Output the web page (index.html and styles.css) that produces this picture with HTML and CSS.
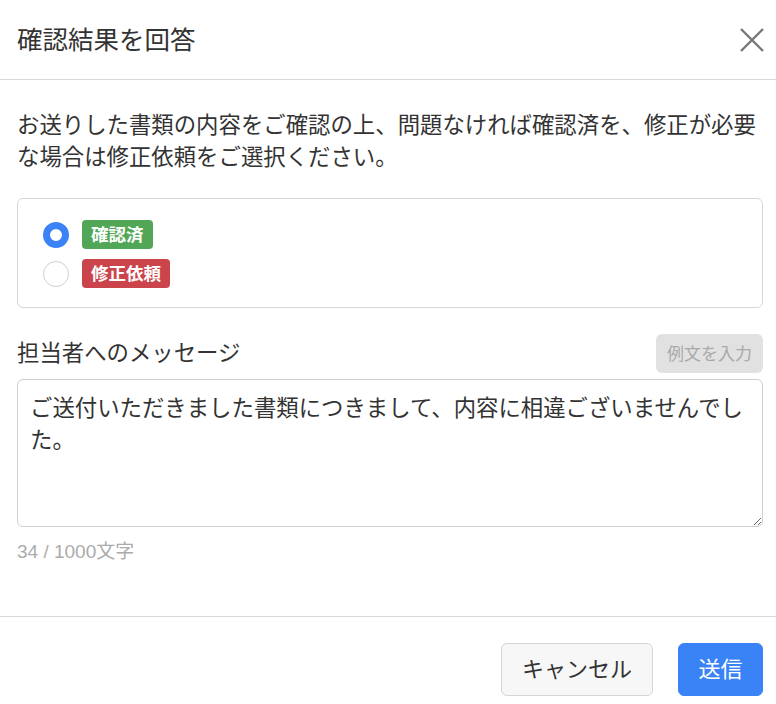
FILE: index.html
```html
<!DOCTYPE html>
<html lang="ja">
<head>
<meta charset="utf-8">
<link rel="stylesheet" href="styles.css">
</head>
<body>
<div class="dialog">
  <header class="dlg-header">
    <h1 class="dlg-title">確認結果を回答</h1>
    <button class="close-btn" aria-label="閉じる">
      <svg width="26" height="26" viewBox="0 0 26 26"><path d="M2 2 L24 24 M24 2 L2 24" stroke="#777" stroke-width="2.4" fill="none" stroke-linecap="butt"/></svg>
    </button>
  </header>
  <main class="dlg-body">
    <p class="desc">お送りした書類の内容をご確認の上、問題なければ確認済を、修正が必要な場合は修正依頼をご選択ください。</p>
    <div class="choice-box">
      <label class="choice">
        <span class="radio radio-on"></span>
        <span class="badge badge-green">確認済</span>
      </label>
      <label class="choice">
        <span class="radio"></span>
        <span class="badge badge-red">修正依頼</span>
      </label>
    </div>
    <div class="msg-head">
      <span class="msg-label">担当者へのメッセージ</span>
      <button class="example-btn" disabled>例文を入力</button>
    </div>
    <textarea class="msg-area">ご送付いただきました書類につきまして、内容に相違ございませんでした。</textarea>
    <div class="counter">34 / 1000文字</div>
  </main>
  <footer class="dlg-footer">
    <button class="btn btn-cancel">キャンセル</button>
    <button class="btn btn-send">送信</button>
  </footer>
</div>
</body>
</html>
```
FILE: styles.css
```css
* { box-sizing: border-box; }
html, body { margin: 0; padding: 0; background: #fff; }
body {
  font-family: "Liberation Sans", "Noto Sans CJK JP", sans-serif;
  color: #333;
}
.dialog { width: 776px; height: 704px; display: flex; flex-direction: column; }
.dlg-header {
  height: 80px;
  border-bottom: 1px solid #d9d9d9;
  display: flex;
  align-items: center;
  justify-content: space-between;
  padding: 0 11px 0 17px;
}
.dlg-title {
  margin: 0 0 3px;
  font-size: 25.5px;
  font-weight: 400;
  color: #333;
  line-height: 1;
  font-family: "Noto Sans CJK JP", sans-serif;
}
.close-btn {
  border: 0; background: none; padding: 0; width: 26px; height: 26px; display: flex;
}
.dlg-body {
  padding: 27px 13px 0 17px;
  flex: 1;
}
.desc {
  margin: 0;
  font-size: 22.4px;
  line-height: 32px;
  color: #333;
  font-family: "Noto Sans CJK JP", sans-serif;
}
.choice-box {
  margin-top: 27px;
  border: 1px solid #d6d6d6;
  border-radius: 6px;
  padding: 21px 24px 19px 25px;
  display: flex;
  flex-direction: column;
  gap: 10px;
  height: 110px;
}
.choice { display: flex; align-items: center; gap: 13px; height: 29px; }
.radio {
  width: 26px; height: 26px; border-radius: 50%;
  border: 1px solid #d0d0d0; background: #fff;
}
.radio-on { border: 7px solid #3b82f6; }
.badge {
  display: inline-flex; align-items: center;
  height: 29px; padding: 0 9px 2px;
  border-radius: 4px;
  color: #fff; font-weight: 600; font-size: 17.5px;
  font-family: "Noto Sans CJK JP", sans-serif;
}
.badge-green { background: #51a755; }
.badge-red { background: #cb444c; }
.msg-head {
  margin-top: 26px;
  display: flex;
  justify-content: space-between;
  align-items: center;
  height: 39px;
}
.msg-label {
  font-size: 22.4px; color: #333;
  padding-bottom: 5px;
  font-family: "Noto Sans CJK JP", sans-serif;
}
.example-btn {
  height: 39px; width: 107px;
  border: 0; border-radius: 6px;
  background: #e1e1e1; color: #a9a9a9;
  font-size: 17px;
  padding: 0 0 3px;
  font-family: "Noto Sans CJK JP", sans-serif;
}
.msg-area {
  display: block;
  margin-top: 6px;
  width: 100%;
  height: 148px;
  border: 1px solid #cfcfcf;
  border-radius: 6px;
  padding: 10px 12px;
  font-size: 22.4px;
  line-height: 32px;
  color: #333;
  font-family: "Noto Sans CJK JP", sans-serif;
  resize: vertical;
  outline: none;
}
.counter {
  margin-top: 13px;
  font-size: 19px;
  line-height: 24px;
  color: #ababab;
}
.dlg-footer {
  border-top: 1px solid #d9d9d9;
  height: 88px;
  display: flex;
  justify-content: flex-end;
  align-items: flex-start;
  gap: 25px;
  padding: 26px 13px 0 0;
}
.btn {
  height: 53px; padding: 0 0 5px;
  border-radius: 6px;
  font-size: 22px;
  white-space: nowrap;
  font-family: "Noto Sans CJK JP", sans-serif;
}
.btn-cancel { background: #f7f7f7; border: 1px solid #d6d6d6; color: #333; width: 152px; }
.btn-send { background: #3a83f7; border: 1px solid #3a83f7; color: #fff; width: 85px; }
```
